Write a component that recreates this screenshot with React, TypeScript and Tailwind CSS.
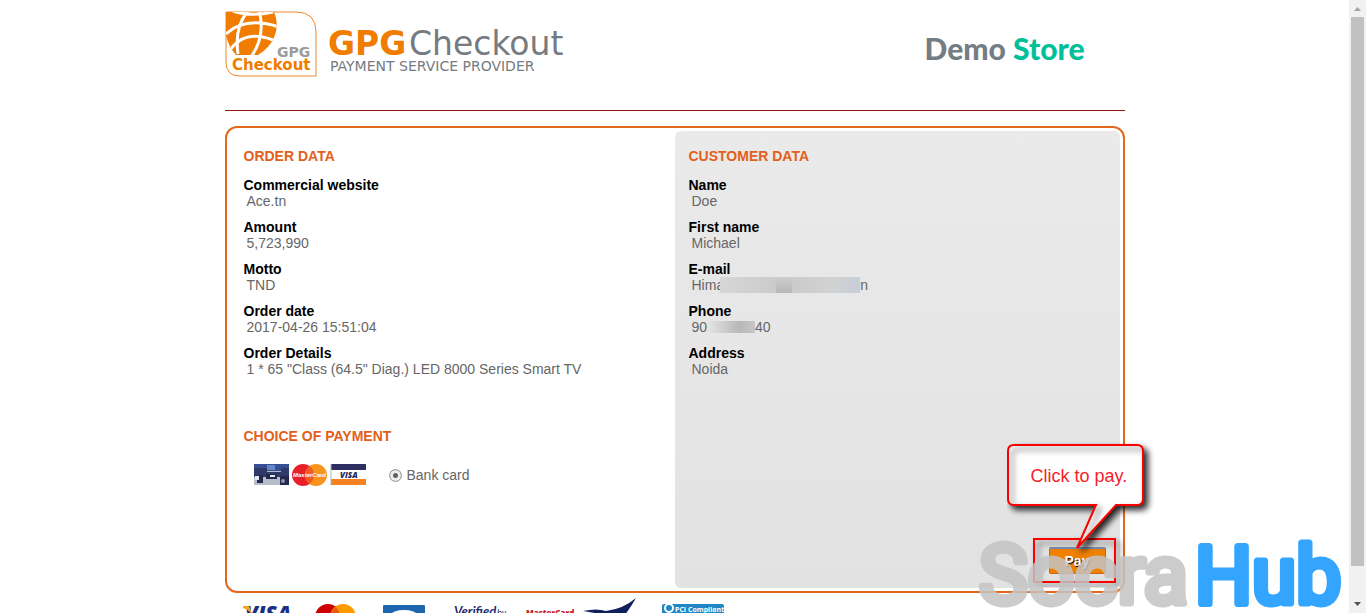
import { ReactNode } from 'react';

interface Field {
  label: string;
  value: ReactNode;
}

interface FieldListProps {
  title: string;
  fields: Array<Field>;
}

const emailMask = (
  <span className="-ml-1 inline-flex h-4 w-35 overflow-hidden bg-[#d3d3d3] align-top">
    <span className="w-14 bg-linear-to-r from-[#d6d6d6] to-[#cbcbcb]" />
    <span className="w-4 bg-linear-to-b from-[#cdcdcd] to-[#b6b6b6]" />
    <span className="w-10 bg-linear-to-r from-[#cbcbcb] to-[#d2d2d2]" />
    <span className="flex-1 bg-linear-to-r from-[#d2d2d2] to-[#c6ced6]" />
  </span>
);

const phoneMask = (
  <span className="inline-flex h-4 w-12 items-center align-top">
    <span className="h-3 w-5 bg-linear-to-r from-[#e6e6e6] to-[#c9c9c9]" />
    <span className="h-3 w-3 bg-linear-to-r from-[#c9c9c9] to-[#b8b8b8]" />
    <span className="h-3 flex-1 bg-linear-to-r from-[#b8b8b8] to-[#c6c6c6]" />
  </span>
);

const orderFields: Array<Field> = [
  { label: 'Commercial website', value: 'Ace.tn' },
  { label: 'Amount', value: '5,723,990' },
  { label: 'Motto', value: 'TND' },
  { label: 'Order date', value: '2017-04-26 15:51:04' },
  {
    label: 'Order Details',
    value: '1 * 65 "Class (64.5" Diag.) LED 8000 Series Smart TV',
  },
];

const customerFields: Array<Field> = [
  { label: 'Name', value: 'Doe' },
  { label: 'First name', value: 'Michael' },
  { label: 'E-mail', value: <>Hima{emailMask}n</> },
  { label: 'Phone', value: <>90{phoneMask}40</> },
  { label: 'Address', value: 'Noida' },
];

const FieldList = ({ title, fields }: FieldListProps) => {
  return (
    <section>
      <h2 className="font-bold text-[#e2601c]">{title}</h2>
      <dl className="mt-[13px] space-y-[10px]">
        {fields.map((field) => (
          <div key={field.label}>
            <dt className="font-bold text-black">{field.label}</dt>
            <dd className="pl-[3px]">{field.value}</dd>
          </div>
        ))}
      </dl>
    </section>
  );
};

const GpgLogo = () => {
  return (
    <svg width="342" height="68" viewBox="0 0 342 68" aria-label="GPG Checkout">
      <clipPath id="globe">
        <path d="M1 1H49Q54 12 50 24Q46 36 33 44H11Q3 35 1 24Z" />
      </clipPath>
      <path
        d="M1 1H71Q91 1 91 21V65H15Q1 65 1 51Z"
        fill="#fff"
        stroke="#ee8a2a"
      />
      <g clipPath="url(#globe)">
        <rect width="60" height="50" fill="#f07d00" />
        <g fill="none" stroke="#fff" strokeWidth="3">
          <path d="M8 0Q26 6 48 1" />
          <path d="M1 23Q20 5 54 16" />
          <path d="M5 39Q20 18 48 29" />
          <path d="M24 -1Q9 15 13 43" />
          <path d="M34 -1Q41 25 26 46" />
        </g>
        <path d="M-1 20Q3 34 9 46H-1Z" fill="#fff" />
      </g>
      <g fontFamily="'DejaVu Sans'">
        <text x="52" y="46" fontSize="14" fontWeight="700" fill="#9b9b9b">
          GPG
        </text>
        <text x="7" y="59" fontSize="15" fontWeight="700" fill="#f07d00">
          Checkout
        </text>
        <text x="103" y="44" fontSize="33" fontWeight="700" fill="#f07d00">
          GPG
        </text>
        <text x="184" y="44" fontSize="33" fill="#757b80">
          Checkout
        </text>
        <text x="105" y="60" fontSize="14" fill="#757b80">
          PAYMENT SERVICE PROVIDER
        </text>
      </g>
    </svg>
  );
};

const CardBrands = () => {
  return (
    <svg width="112" height="22" viewBox="0 0 112 22" aria-hidden="true">
      <rect width="35" height="21" fill="#b7bccb" />
      <rect width="35" height="7" fill="#344f96" />
      <path d="M0 4H13V8H27V4H35V13H0Z" fill="#303a69" />
      <path d="M13 1H21V6H13Z" fill="#6687c7" />
      <path d="M3 11H9V19H3ZM12 10H23V15H12ZM26 12H35V21H26Z" fill="#23284c" />
      <path d="M1 12H5V16H1ZM16 11H21V13H16Z" fill="#e6e8ef" />
      <circle cx="29" cy="17" r="2" fill="#8c93bb" />
      <circle cx="49" cy="11" r="11" fill="#e8202a" />
      <circle cx="62" cy="11" r="11" fill="#f7941d" />
      <path d="M55.500 2A11 11 0 0 1 55.500 20A11 11 0 0 1 55.500 2Z" fill="#f15a22" />
      <text
        x="39"
        y="13"
        fontFamily="'Liberation Sans'"
        fontSize="6"
        fontWeight="700"
        fontStyle="italic"
        fill="#fff"
      >
        MasterCard
      </text>
      <rect x="77" width="35" height="21" fill="#fff" />
      <path d="M77 0H112V6H77Z" fill="#2c2f60" />
      <path d="M77 15H112V21H77Z" fill="#f58220" />
      <path d="M77 0V21" stroke="#b0b4c4" />
      <text
        x="86"
        y="14"
        fontFamily="'Open Sans'"
        fontSize="8"
        fontWeight="800"
        fontStyle="italic"
        fill="#23265a"
      >
        VISA
      </text>
    </svg>
  );
};

const PayCallout = () => {
  return (
    <div className="pointer-events-none absolute -right-[51px] -bottom-[13px] h-[145px] w-[150px]">
      <svg width="150" height="145" viewBox="0 0 150 145" className="absolute">
        <defs>
          <filter id="dark" x="-20%" y="-20%" width="150%" height="150%">
            <feDropShadow dx="4" dy="4" stdDeviation="3" floodOpacity="0.9" />
          </filter>
          <filter id="soft" x="-20%" y="-20%" width="150%" height="150%">
            <feDropShadow dx="4" dy="4" stdDeviation="3" floodOpacity="0.6" />
          </filter>
        </defs>
        <rect
          x="27"
          y="97"
          width="81"
          height="43"
          fill="none"
          stroke="#fa0005"
          strokeWidth="2"
          filter="url(#soft)"
        />
        <path
          d="M7 3H130Q136 3 136 9V57Q136 63 130 63H109L70 106L89 63H7Q1 63 1 57V9Q1 3 7 3Z"
          fill="#fff"
          filter="url(#dark)"
        />
        <path
          d="M7 3H130Q136 3 136 9V57Q136 63 130 63H109L70 106L89 63H7Q1 63 1 57V9Q1 3 7 3Z"
          fill="none"
          stroke="#fa0005"
          strokeWidth="2"
          filter="url(#soft)"
        />
      </svg>
      <p className="relative pt-[22px] pl-6 text-lg leading-6 text-[#f5222a]">
        Click to pay.
      </p>
    </div>
  );
};

const Partners = () => {
  return (
    <ul className="mt-1 flex h-12 items-start pl-4">
      <li className="w-[72px]">
        <svg width="54" height="40" viewBox="0 0 54 40">
          <text x="4" y="24" fontFamily="'Open Sans'" fontSize="21" fontWeight="800" fontStyle="italic" fill="#1b2f86">
            VISA
          </text>
          <path d="M2 9H8L11 17Q7 12 2 11Z" fill="#f5a51c" />
        </svg>
      </li>
      <li className="w-[68px]">
        <svg width="46" height="40" viewBox="0 0 46 40">
          <circle cx="15" cy="20" r="13" fill="#cc0000" />
          <circle cx="30" cy="20" r="13" fill="#ff9900" />
          <path d="M22.500 10A13 13 0 0 1 22.500 30A13 13 0 0 1 22.500 10Z" fill="#e85a10" />
        </svg>
      </li>
      <li className="w-[70px]">
        <svg width="46" height="40" viewBox="0 0 46 40">
          <rect x="2" y="8" width="42" height="28" rx="1" fill="#1f66b0" />
          <ellipse cx="23" cy="18" rx="13" ry="5" fill="#fff" />
        </svg>
      </li>
      <li className="w-[70px]">
        <svg width="62" height="40" viewBox="0 0 62 40">
          <text x="3" y="19" fontFamily="Lato" fontSize="13" fontWeight="700" fontStyle="italic" fill="#1e2a6e">
            Verified
          </text>
          <text x="46" y="19" fontFamily="Lato" fontSize="9" fontStyle="italic" fill="#1e2a6e">
            by
          </text>
        </svg>
      </li>
      <li className="w-[62px]">
        <svg width="62" height="40" viewBox="0 0 62 40">
          <text x="5" y="19" fontFamily="'Open Sans'" fontSize="8" fontWeight="800" fill="#c8202c">
            MasterCard
          </text>
        </svg>
      </li>
      <li className="w-[77px]">
        <svg width="60" height="40" viewBox="0 0 60 40">
          <path d="M0 14Q14 11 23 14Q40 12 53 1Q44 17 33 28Q25 17 0 14Z" fill="#10205c" />
        </svg>
      </li>
      <li>
        <svg width="66" height="40" viewBox="0 0 66 40">
          <rect x="2" y="7" width="62" height="28" rx="2" fill="#2187c4" />
          <circle cx="9" cy="11" r="4" fill="none" stroke="#fff" strokeWidth="2" />
          <text x="15" y="15" fontFamily="'Open Sans'" fontSize="7" fontWeight="700" fill="#fff">
            PCI Compliant
          </text>
        </svg>
      </li>
    </ul>
  );
};

const Watermark = () => {
  return (
    <svg
      width="374"
      height="82"
      viewBox="0 0 374 82"
      className="pointer-events-none absolute right-0 bottom-0"
      fontFamily="Roboto"
      strokeWidth="7"
      strokeLinejoin="round"
    >
      <g opacity="0.85">
        <text x="4" y="72" fontSize="82" fill="#c4c4c4" stroke="#c4c4c4">
          Socra
        </text>
      </g>
      <text x="220" y="72" fontSize="80" fill="#33a5ff" stroke="#33a5ff">
        Hub
      </text>
    </svg>
  );
};

const Scrollbar = () => {
  return (
    <div className="flex w-[17px] shrink-0 flex-col items-center bg-[#f1f1f1]">
      <svg width="17" height="17" viewBox="0 0 17 17">
        <path d="M5 11H12L8.500 7Z" fill="#a3a3a3" />
      </svg>
      <div className="w-[13px] flex-1 bg-[#c1c1c1]" />
      <svg width="17" height="47" viewBox="0 0 17 47">
        <path d="M5 36H12L8.500 40Z" fill="#505050" />
      </svg>
    </div>
  );
};

const App = () => {
  return (
    <div className="flex h-screen overflow-hidden bg-white font-['Liberation_Sans',Arial,sans-serif] text-sm leading-4 text-[#666]">
      <div className="relative min-w-0 flex-1 overflow-hidden">
        <div className="mx-auto max-w-[900px]">
          <header className="flex h-[111px] items-start justify-between border-b border-[#8f1a10] pt-[11px] pr-10">
            <GpgLogo />
            <h1 className="pt-[19px] font-['Lato',sans-serif] text-3xl leading-9 font-black text-[#737d83]">
              Demo <span className="text-[#00c09a]">Store</span>
            </h1>
          </header>

          <main className="mt-[15px] grid grid-cols-2 rounded-xl border-2 border-[#e2681c] p-[3px]">
            <div className="px-[14px] pt-[17px] pb-[102px]">
              <FieldList title="ORDER DATA" fields={orderFields} />
              <h2 className="mt-[51px] font-bold text-[#e2601c]">
                CHOICE OF PAYMENT
              </h2>
              <div className="mt-5 flex items-center pl-[10px]">
                <CardBrands />
                <label className="ml-[23px] flex items-center gap-[5px]">
                  <input
                    type="radio"
                    name="payment"
                    defaultChecked
                    className="size-[13px] appearance-none rounded-full border border-[#a8a8a8] bg-[#606060] shadow-[inset_0_0_0_3px_#eee]"
                  />
                  Bank card
                </label>
              </div>
            </div>
            <div className="relative rounded-md bg-linear-to-b from-[#eaeaea] to-[#e2e2e2] px-[14px] pt-[17px]">
              <FieldList title="CUSTOMER DATA" fields={customerFields} />
              <div className="absolute right-[14px] bottom-[14px]">
                <button className="block h-[27px] w-[57px] rounded-xs border border-t-2 border-[#d0601a] border-t-[#7a8fae] bg-[#f08000] font-bold text-white text-shadow-[1px_1px_1px_#000]">
                  Pay
                </button>
                <PayCallout />
              </div>
            </div>
          </main>

          <Partners />
        </div>
        <Watermark />
      </div>
      <Scrollbar />
    </div>
  );
};

export default App;
